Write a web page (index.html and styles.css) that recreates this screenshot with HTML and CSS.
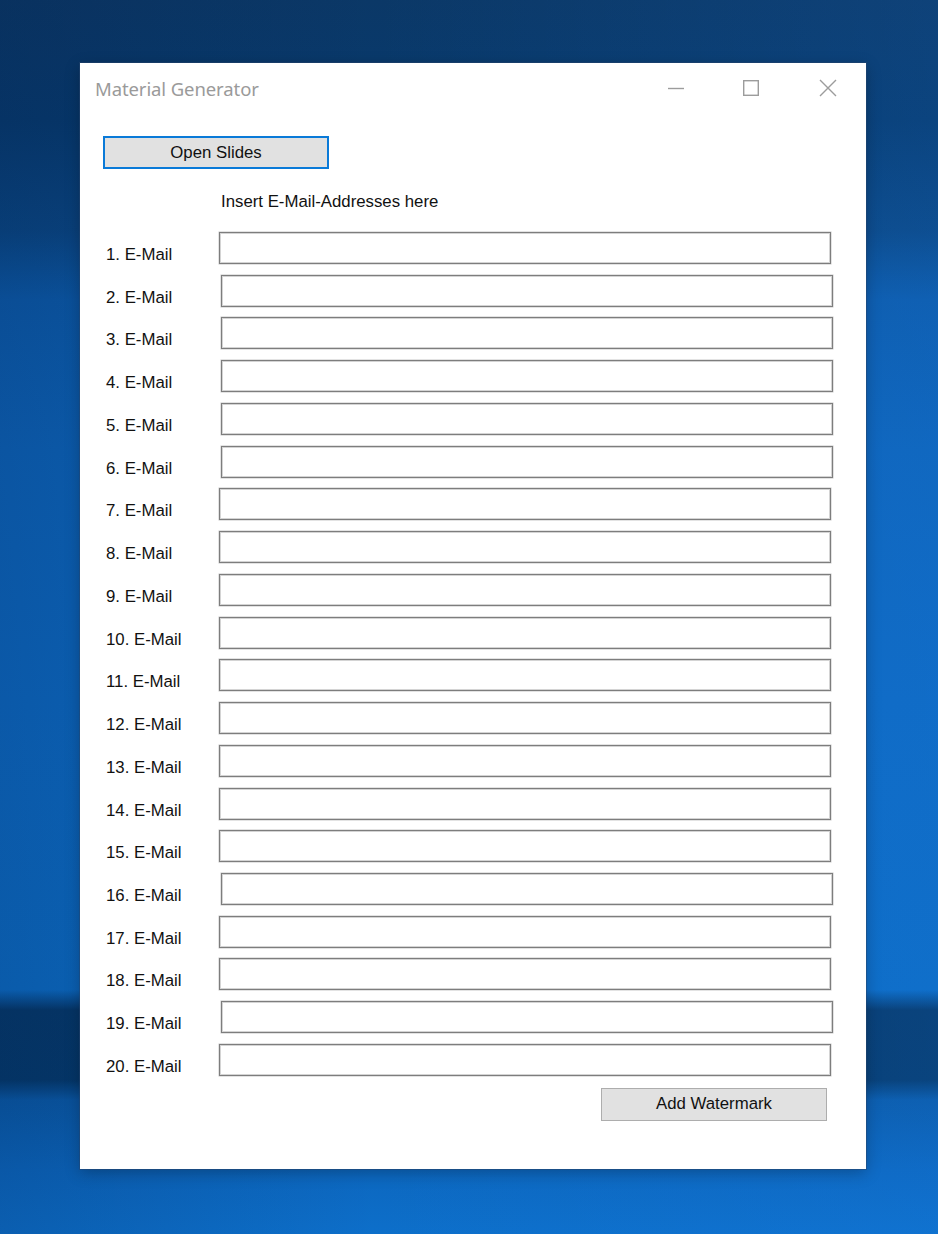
FILE: index.html
```html
<!DOCTYPE html>
<html>
<head>
<meta charset="utf-8">
<title>Material Generator</title>
<link rel="stylesheet" href="styles.css">
</head>
<body>
<div class="desktop">
  <div class="window">
    <div class="titlebar">
      <span class="title">Material Generator</span>
      <div class="controls">
        <div class="ctl"><svg width="18" height="18" viewBox="0 0 18 18"><path d="M1 9.5H17" stroke="#9c9c9c" stroke-width="1.4" fill="none"/></svg></div>
        <div class="ctl ctl-max"><svg width="18" height="18" viewBox="0 0 18 18"><rect x="1.7" y="1.7" width="14.6" height="14.6" stroke="#9c9c9c" stroke-width="1.4" fill="none"/></svg></div>
        <div class="ctl"><svg width="18" height="18" viewBox="0 0 18 18"><path d="M1 1L17 17M17 1L1 17" stroke="#9c9c9c" stroke-width="1.4" fill="none"/></svg></div>
      </div>
    </div>
    <div class="content">
      <button class="btn btn-focus">Open Slides</button>
      <div class="hint">Insert E-Mail-Addresses here</div>
      <div class="rows">
        <div class="row"><label class="lbl">1. E-Mail</label><input class="field" type="text"></div>
        <div class="row"><label class="lbl">2. E-Mail</label><input class="field shift" type="text"></div>
        <div class="row"><label class="lbl">3. E-Mail</label><input class="field shift" type="text"></div>
        <div class="row"><label class="lbl">4. E-Mail</label><input class="field shift" type="text"></div>
        <div class="row"><label class="lbl">5. E-Mail</label><input class="field shift" type="text"></div>
        <div class="row"><label class="lbl">6. E-Mail</label><input class="field shift" type="text"></div>
        <div class="row"><label class="lbl">7. E-Mail</label><input class="field" type="text"></div>
        <div class="row"><label class="lbl">8. E-Mail</label><input class="field" type="text"></div>
        <div class="row"><label class="lbl">9. E-Mail</label><input class="field" type="text"></div>
        <div class="row"><label class="lbl">10. E-Mail</label><input class="field" type="text"></div>
        <div class="row"><label class="lbl">11. E-Mail</label><input class="field" type="text"></div>
        <div class="row"><label class="lbl">12. E-Mail</label><input class="field" type="text"></div>
        <div class="row"><label class="lbl">13. E-Mail</label><input class="field" type="text"></div>
        <div class="row"><label class="lbl">14. E-Mail</label><input class="field" type="text"></div>
        <div class="row"><label class="lbl">15. E-Mail</label><input class="field" type="text"></div>
        <div class="row"><label class="lbl">16. E-Mail</label><input class="field shift" type="text"></div>
        <div class="row"><label class="lbl">17. E-Mail</label><input class="field" type="text"></div>
        <div class="row"><label class="lbl">18. E-Mail</label><input class="field" type="text"></div>
        <div class="row"><label class="lbl">19. E-Mail</label><input class="field shift" type="text"></div>
        <div class="row"><label class="lbl">20. E-Mail</label><input class="field" type="text"></div>
      </div>
      <div class="footer">
        <button class="btn">Add Watermark</button>
      </div>
    </div>
  </div>
</div>
</body>
</html>
```
FILE: styles.css
```css
html, body {
  margin: 0;
  padding: 0;
}

body {
  width: 938px;
  height: 1234px;
  overflow: hidden;
}

.desktop {
  width: 938px;
  height: 1234px;
  padding-top: 63px;
  box-sizing: border-box;
  background:
    linear-gradient(to right, rgba(0, 20, 60, 0.18) 0%, rgba(0, 0, 0, 0) 40%, rgba(40, 140, 255, 0.12) 100%),
    linear-gradient(to bottom,
      #0b3867 0px,
      #073a6e 120px,
      #0a4683 230px,
      #0c5aa9 300px,
      #0d63b8 450px,
      #0d68c0 700px,
      #0c6bc3 990px,
      #06396b 1010px,
      #053a6d 1080px,
      #0a5aa8 1100px,
      #0c67bf 1170px,
      #0d6fca 1234px);
}

.window {
  margin-left: 80px;
  width: 786px;
  height: 1106px;
  background: #ffffff;
  box-shadow: 0 0 0 1px rgba(40, 70, 110, 0.5), 0 4px 14px rgba(0, 0, 0, 0.25);
  display: flex;
  flex-direction: column;
}

.titlebar {
  height: 50px;
  display: flex;
  align-items: center;
  padding-left: 15px;
}

.title {
  font-family: "Noto Sans", "Open Sans", sans-serif;
  font-size: 18.5px;
  color: #9a9a9a;
  flex: 1;
  letter-spacing: -0.1px;
}

.controls {
  display: flex;
  height: 50px;
}

.ctl {
  width: 76px;
  height: 50px;
  display: flex;
  align-items: center;
  justify-content: center;
}

.ctl-max {
  padding-right: 3px;
  box-sizing: border-box;
}

.content {
  padding-top: 23px;
  display: flex;
  flex-direction: column;
  font-family: "Liberation Sans", Arial, sans-serif;
  font-size: 16.8px;
  color: #111;
}

.btn {
  font-family: "Liberation Sans", Arial, sans-serif;
  font-size: 16.8px;
  color: #111;
  background: #e1e1e1;
  border: 1px solid #adadad;
  width: 226px;
  height: 33px;
  padding: 0;
  display: flex;
  align-items: center;
  justify-content: center;
}

.btn-focus {
  margin-left: 23px;
  height: 33px;
  border: 2px solid #0a7ad8;
}

.hint {
  margin-top: 23px;
  margin-left: 141px;
  line-height: 20px;
  height: 20px;
}

.rows {
  margin-top: 20px;
  display: flex;
  flex-direction: column;
  gap: 10.74px;
}

.row {
  display: flex;
  align-items: flex-start;
  height: 32px;
}

.lbl {
  width: 113px;
  padding-left: 26px;
  margin-top: 13px;
  line-height: 20px;
  height: 20px;
  box-sizing: content-box;
  white-space: nowrap;
}

.field {
  width: 612px;
  height: 32px;
  box-sizing: border-box;
  border: 1px solid #7d7d7d;
  box-shadow: inset 0 0 0 1px #d4d4d4, 0 0 0 0.5px #c8c8c8;
  background: #fff;
  margin: 0;
  padding: 0;
  outline: none;
}

.field.shift {
  margin-left: 2px;
}

.footer {
  margin-top: 12px;
  padding-left: 521px;
}
```
